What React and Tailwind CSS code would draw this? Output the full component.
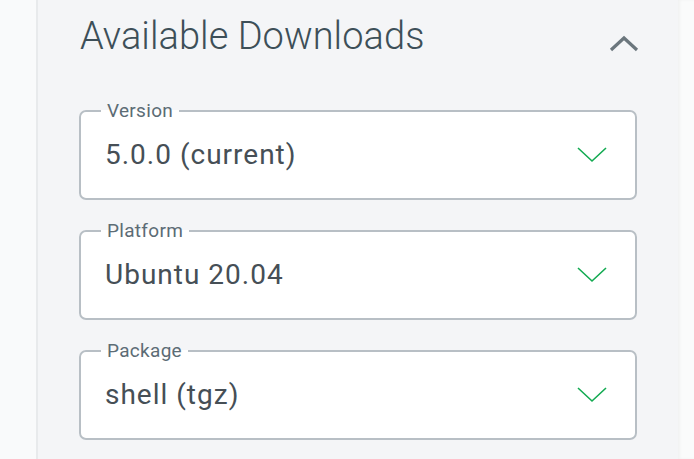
import React from "react";

const fields = [
  { label: "Version", value: "5.0.0 (current)" },
  { label: "Platform", value: "Ubuntu 20.04" },
  { label: "Package", value: "shell (tgz)" },
];

const ChevronDown = () => (
  <svg width="30" height="18" viewBox="0 0 30 18" fill="none">
    <path d="M1 2 L15 15 L29 2" stroke="#13aa52" strokeWidth="1.6" />
  </svg>
);

const ChevronUp = () => (
  <svg width="30" height="18" viewBox="0 0 30 18" fill="none">
    <path d="M2 15 L15 3 L28 15" stroke="#6b767d" strokeWidth="3.2" />
  </svg>
);

const SelectBox = ({ label, value }) => (
  <fieldset className="h-[99px] rounded-[7px] border-2 border-[#b8bfc5] bg-white pl-[24px] pr-[28px]">
    <legend className="ml-[-4px] px-[6px] text-[19px] leading-[20px] tracking-[0.3px] text-[#5c6c75]">
      {label}
    </legend>
    <div className="flex h-[68px] items-center justify-between">
      <span className="text-[28px] tracking-[1px] text-[#464f56]">{value}</span>
      <ChevronDown />
    </div>
  </fieldset>
);

export default function App() {
  return (
    <div
      className="flex h-[459px] w-[694px] overflow-hidden"
      style={{ fontFamily: "Roboto, 'Noto Sans', sans-serif" }}
    >
      <div className="w-[38px] border-r-2 border-[#e8eaec] bg-[#f9fafb]" />
      <div className="flex-1 bg-[#f4f5f7] px-[41px]">
        <div className="flex h-[101px] items-start justify-between pt-[8px]">
          <h2 className="ml-[1px] text-[38px] font-light tracking-[0.05px] text-[#3d4f58]">
            Available Downloads
          </h2>
          <div className="mt-[27px] mr-[-2px]">
            <ChevronUp />
          </div>
        </div>
        <div className="flex flex-col gap-[21px]">
          {fields.map((f) => (
            <SelectBox key={f.label} label={f.label} value={f.value} />
          ))}
        </div>
      </div>
      <div className="w-[16px] bg-[#fafbfb] shadow-[inset_2px_0_3px_rgba(0,0,0,0.04)]" />
    </div>
  );
}
